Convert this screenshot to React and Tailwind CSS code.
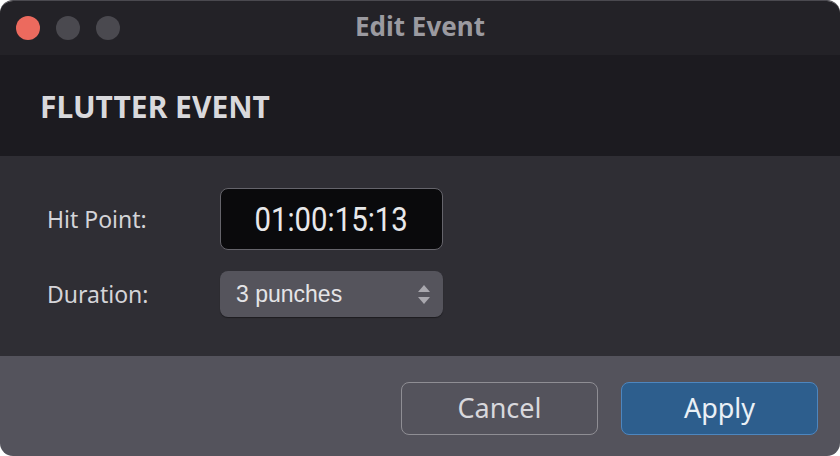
const App = () => {
  return (
    <div className="w-[840px] h-[456px] bg-white">
      <div className="w-full h-full rounded-[13px] overflow-hidden flex flex-col border-t border-[#4a494f] font-['Noto_Sans',sans-serif]">
        {/* Title bar */}
        <div className="h-[54px] bg-[#232227] flex items-center relative">
          <div className="flex items-center gap-[16px] pl-[16px]">
            <span className="w-[24px] h-[24px] rounded-full bg-[#ec6a5e]"></span>
            <span className="w-[24px] h-[24px] rounded-full bg-[#4a494f]"></span>
            <span className="w-[24px] h-[24px] rounded-full bg-[#4a494f]"></span>
          </div>
          <div className="absolute inset-0 flex items-center justify-center pointer-events-none">
            <span className="text-[26px] font-bold text-[#9b9aa0] -mt-[3px]">
              Edit Event
            </span>
          </div>
        </div>

        {/* Header */}
        <div className="h-[101px] bg-[#1c1b20] flex items-center pl-[40px]">
          <h1 className="text-[30px] font-bold text-[#d9d9dc] mt-[2px]">
            FLUTTER EVENT
          </h1>
        </div>

        {/* Body */}
        <div className="h-[200px] bg-[#2f2e34] pl-[47px] pt-[32px]">
          <div className="flex items-center">
            <span className="w-[173px] text-[23px] text-[#d4d4d8]">Hit Point:</span>
            <div className="w-[223px] h-[62px] rounded-[8px] bg-[#0a0a0c] border border-[#65646b] flex items-center justify-center">
              <span className="block text-[33px] leading-none text-[#e8e8ea] font-['Roboto',sans-serif] origin-center [transform:scaleX(0.89)]">
                01:00:15:13
              </span>
            </div>
          </div>
          <div className="flex items-center mt-[21px]">
            <span className="w-[173px] text-[23px] text-[#d4d4d8]">Duration:</span>
            <div className="w-[223px] h-[46px] rounded-[8px] bg-[#55545c] flex items-center justify-between pl-[16px] pr-[12px] shadow-[0_1px_1px_rgba(0,0,0,0.4)]">
              <span className="text-[23px] text-[#e4e4e7] font-['Liberation_Sans',Arial,sans-serif]">
                3 punches
              </span>
              <svg width="14" height="24" viewBox="0 0 14 24">
                <polygon points="7,3 13,10 1,10" fill="#a9a8ae" />
                <polygon points="1,15 13,15 7,22" fill="#a9a8ae" />
              </svg>
            </div>
          </div>
        </div>

        {/* Footer */}
        <div className="flex-1 bg-[#54535c] flex items-start justify-end gap-[23px] pt-[26px] pr-[22px]">
          <button className="w-[197px] h-[53px] rounded-[8px] border border-[#8f8e94] text-[27px] text-[#d8d8dc]">
            Cancel
          </button>
          <button className="w-[197px] h-[53px] rounded-[8px] border border-[#4d86bf] bg-[#2d5e8d] text-[27px] text-[#eaf0f6]">
            Apply
          </button>
        </div>
      </div>
    </div>
  );
};

export default App;
